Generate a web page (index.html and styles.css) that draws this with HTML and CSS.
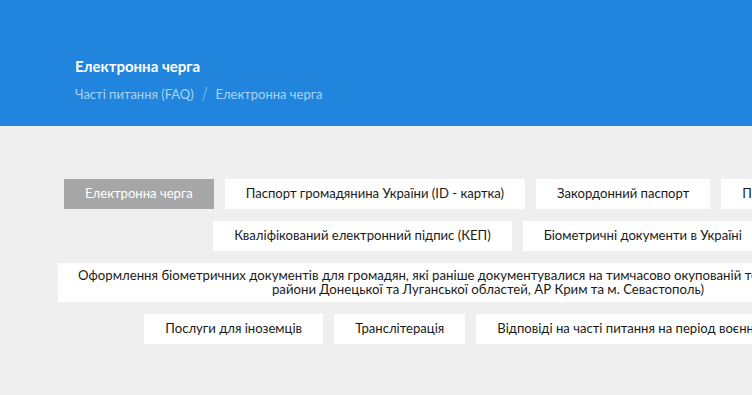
FILE: index.html
```html
<!DOCTYPE html>
<html lang="uk">
<head>
  <meta charset="UTF-8" />
  <meta name="viewport" content="width=device-width, initial-scale=1.0" />
  <title>Електронна черга</title>
  <link rel="stylesheet" href="styles.css">
</head>
<body>
  <header class="page-head">
    <h1 class="page-title">Електронна черга</h1>
    <nav class="crumbs">
      <a href="#">Часті питання (FAQ)</a>
      <span class="crumb-sep">/</span>
      <span>Електронна черга</span>
    </nav>
  </header>

  <main class="faq">
    <div class="tabs">
      <a class="tab active" href="#">Електронна черга</a>
      <a class="tab" href="#">Паспорт громадянина України (ID - картка)</a>
      <a class="tab" href="#">Закордонний паспорт</a>
      <a class="tab" href="#">Посвідка на проживання</a>
      <a class="tab" href="#">Кваліфікований електронний підпис (КЕП)</a>
      <a class="tab" href="#">Біометричні документи в Україні</a>
      <a class="tab wide" href="#">Оформлення біометричних документів для громадян, які раніше документувалися на тимчасово окупованій території України (окремі<br>райони Донецької та Луганської областей, АР Крим та м. Севастополь)</a>
      <a class="tab" href="#">Послуги для іноземців</a>
      <a class="tab" href="#">Транслітерація</a>
      <a class="tab" href="#">Відповіді на часті питання на період воєнного стану</a>
    </div>
  </main>
</body>
</html>
```

FILE: styles.css
```css
body {
  margin: 0;
  min-width: 980px;
  font-family: Lato, 'Open Sans', sans-serif;
  background: #f0efef;
  color: #1a1a1a;
  overflow: hidden;
}
.page-head {
  background: #2185de;
  height: 126px;
  box-sizing: border-box;
  padding: 56px 75px 0;
}
.page-title {
  margin: 0;
  color: #fff;
  font-size: 15px;
  font-weight: 700;
  line-height: 20px;
}
.crumbs {
  margin-top: 9px;
  font-size: 13px;
  line-height: 18px;
  color: #a9d3f6;
  display: flex;
  align-items: center;
  gap: 8px;
}
.crumbs a {
  color: inherit;
  text-decoration: none;
}
.crumb-sep {
  color: #7fb9ec;
  font-family: 'DejaVu Sans', sans-serif;
  font-weight: 200;
  font-size: 17px;
}
.faq {
  padding: 53px 0 0 38px;
}
.tabs {
  width: 900px;
  display: flex;
  flex-wrap: wrap;
  justify-content: center;
  gap: 12px 11px;
}
.tab {
  background: #fff;
  color: #1a1a1a;
  text-decoration: none;
  font-size: 13.1px;
  line-height: 16px;
  padding: 6px 21px 8px;
  text-align: center;
}
.tab.active {
  background: #a6a6a6;
  color: #fff;
}
.tab.wide {
  font-size: 13.2px;
  line-height: 14px;
  padding: 5px 20px 6px;
}
```
